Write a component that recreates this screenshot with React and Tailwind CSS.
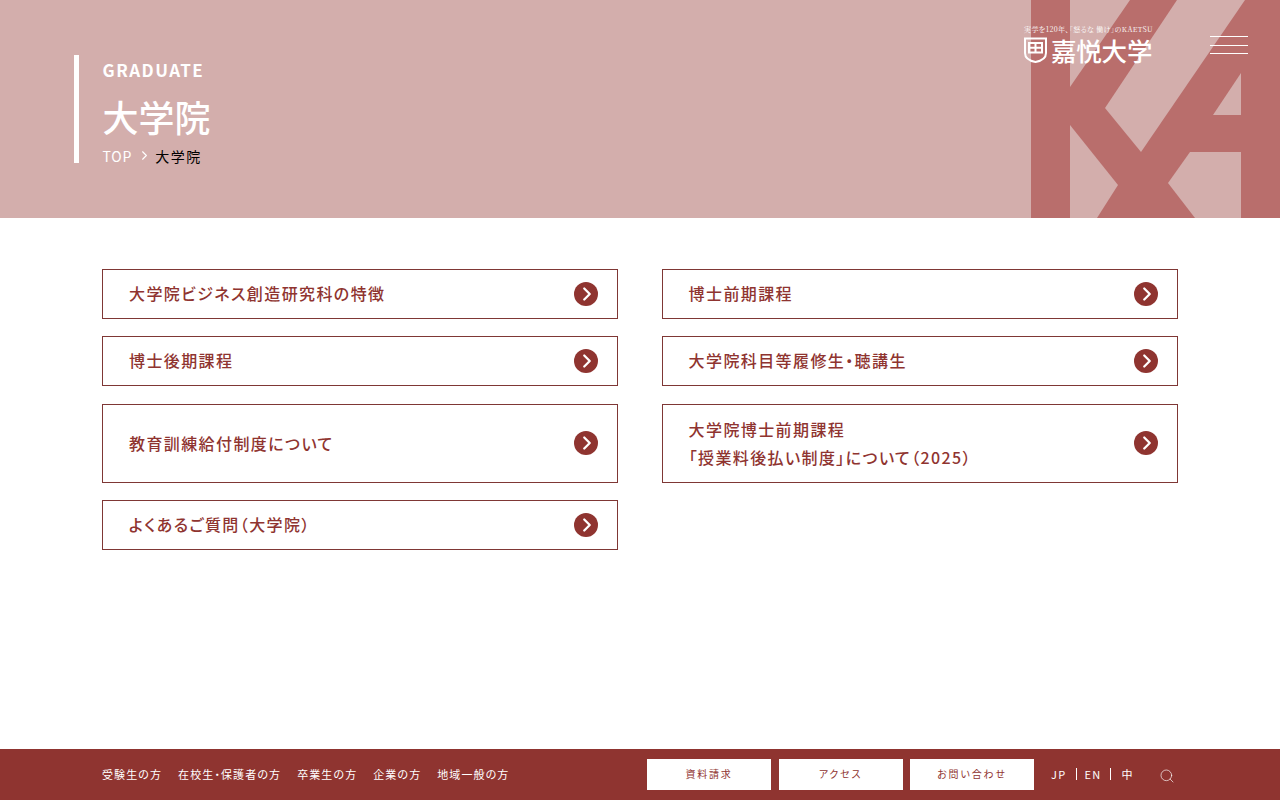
import { ChevronRight, Search } from "lucide-react";

const LINKS = [
  { label: ["大学院ビジネス創造研究科の特徴"] },
  { label: ["博士前期課程"] },
  { label: ["博士後期課程"] },
  { label: ["大学院科目等履修生・聴講生"] },
  { label: ["教育訓練給付制度について"], tall: true },
  { label: ["大学院博士前期課程", "「授業料後払い制度」について（2025）"], tall: true },
  { label: ["よくあるご質問（大学院）"] },
];

const FOOT_LINKS = ["受験生の方", "在校生・保護者の方", "卒業生の方", "企業の方", "地域一般の方"];
const FOOT_BUTTONS = ["資料請求", "アクセス", "お問い合わせ"];

function KaMark() {
  return (
    <svg className="absolute top-0 left-[1031px]" width="249" height="218" viewBox="1031 0 249 218">
      <rect x="1031" y="0" width="249" height="218" fill="#b96e6c" />
      <g fill="#d3aeac">
        <polygon points="1070,0 1130,0 1070,87" />
        <polygon points="1177,0 1245,0 1141,152 1105,108" />
        <polygon points="1241,73 1241,115 1213,115" />
        <polygon points="1070,125 1118,185 1097,218 1070,218" />
        <polygon points="1190,152 1241,152 1241,218 1195,218 1168,183" />
      </g>
    </svg>
  );
}

function Logo() {
  return (
    <div className="absolute top-[25px] left-[1024px] w-[130px] text-white">
      <p className="font-['Noto_Serif_CJK_JP','Liberation_Serif',serif] text-[7px] leading-[8px] tracking-[0.4px] whitespace-nowrap">
        実学を120年、「怒るな 働け」のKAETSU
      </p>
      <div className="flex items-center gap-[4px] mt-[4px]">
        <svg width="23" height="26" viewBox="0 0 23 26" className="shrink-0">
          <path d="M1 1.500h21v14.500c0 5.500-5 8-10.500 9C6 24 1 21.500 1 16z" fill="none" stroke="#fff" strokeWidth="2" />
          <path d="M5 6h13v9.500H5z" fill="none" stroke="#fff" strokeWidth="2" />
          <path d="M11.500 6v9.500M5 10.700h13" stroke="#fff" strokeWidth="2" />
        </svg>
        <span className="text-[25.500px] leading-[26px] font-medium tracking-[-0.2px] whitespace-nowrap">嘉悦大学</span>
      </div>
    </div>
  );
}

function LinkCard({ item }) {
  return (
    <a
      className={`flex items-center justify-between border border-[#7f3735] pl-[26px] pr-[19px] text-[#8f3430] ${
        item.tall ? "h-[79px]" : "h-[50px]"
      }`}
    >
      <span className={`text-[16px] leading-[28px] font-medium tracking-[1.4px] ${item.tall ? "" : "pb-[2px]"}`}>
        {item.label.map((line) => (
          <span key={line} className="block">{line}</span>
        ))}
      </span>
      <span className="flex items-center justify-center w-[24px] h-[24px] rounded-full bg-[#8f3430] text-white shrink-0">
        <ChevronRight size={22} strokeWidth={2.500} className="ml-[1px]" />
      </span>
    </a>
  );
}

export default function App() {
  return (
    <div className="relative flex flex-col h-screen overflow-hidden bg-white font-['Noto_Sans_CJK_JP',sans-serif] [font-feature-settings:'palt']">
      {/* Page header */}
      <header className="relative h-[218px] shrink-0 bg-[#d3aeac] pt-[55px] pl-[74px]">
        <KaMark />
        <Logo />
        <div className="relative border-l-[5px] border-white h-[108px] pl-[23.500px] text-white">
          <p className="text-[17px] leading-[30px] font-semibold tracking-[1.500px]">GRADUATE</p>
          <h1 className="text-[36px] leading-[44px] mt-[9px] font-medium">大学院</h1>
          <div className="flex items-center text-[14px] leading-[12px] mt-[10px]">
            <span className="tracking-[0.8px]">TOP</span>
            <ChevronRight size={15} strokeWidth={1.800} className="ml-[5px] mr-[3px]" />
            <span className="text-black tracking-[1.600px]">大学院</span>
          </div>
        </div>
        <button className="absolute top-[36px] left-[1210px] flex flex-col gap-[7.500px] w-[38px]">
          <span className="block h-px bg-white" />
          <span className="block h-px bg-white" />
          <span className="block h-px bg-white" />
        </button>
      </header>

      {/* Links */}
      <main className="flex-1 pt-[51px] px-[102px]">
        <div className="grid grid-cols-2 gap-x-[43.200px] gap-y-[17.400px]">
          {LINKS.map((item) => (
            <LinkCard key={item.label[0]} item={item} />
          ))}
        </div>
      </main>

      {/* Fixed footer bar */}
      <footer className="flex items-center h-[51px] shrink-0 bg-[#8f3430] pl-[102px] text-white">
        <nav className="flex gap-[16px] w-[545px] pb-[2px] text-[11px] leading-[16px] tracking-[1.100px]">
          {FOOT_LINKS.map((t) => (
            <a key={t}>{t}</a>
          ))}
        </nav>
        <div className="flex gap-[7.500px]">
          {FOOT_BUTTONS.map((t) => (
            <a
              key={t}
              className="flex items-center justify-center w-[124px] h-[31px] pb-[2px] bg-white text-[#8f3430] text-[10px] tracking-[1.800px]"
            >
              {t}
            </a>
          ))}
        </div>
        <div className="flex items-center ml-[17px] pb-[2px] text-[11px] leading-[12px] tracking-[1.300px]">
          <span>JP</span>
          <span className="ml-[10px] pl-[7px] border-l border-white">EN</span>
          <span className="ml-[8px] pl-[11px] border-l border-white">中</span>
        </div>
        <Search size={16} strokeWidth={1} className="ml-[25px] mt-[3px]" />
      </footer>
    </div>
  );
}
